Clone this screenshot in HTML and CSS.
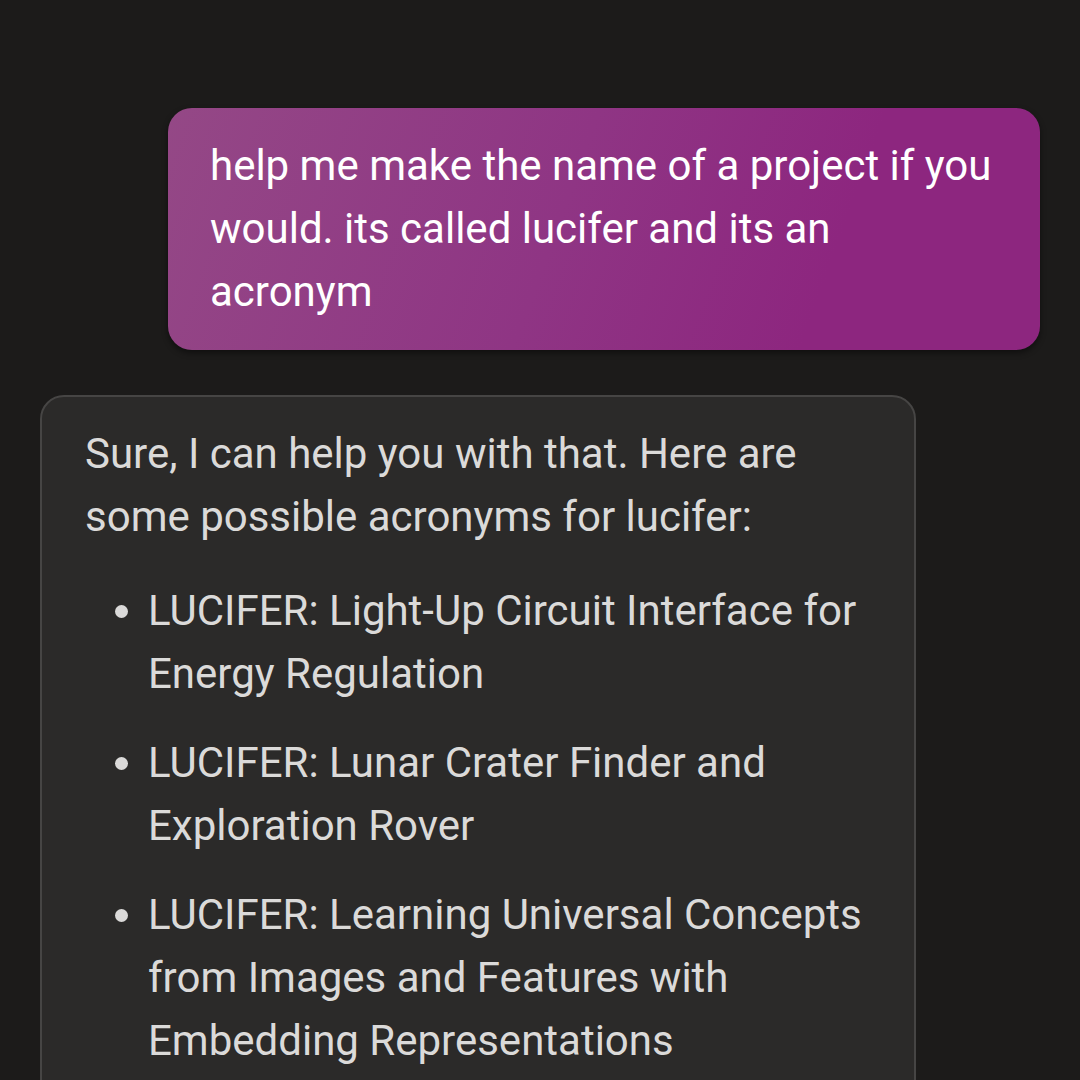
FILE: index.html
```html
<!DOCTYPE html>
<html lang="en">
<head>
    <meta charset="UTF-8">
    <meta name="viewport" content="width=device-width, initial-scale=1.0">
    <title>Chat</title>
    <link rel="stylesheet" href="styles.css">
</head>
<body>
    <div class="chat">
        <div class="bubble user">
            help me make the name of a project if you would. its called lucifer and its an acronym
        </div>

        <div class="bubble bot">
            <p>Sure, I can help you with that. Here are some possible acronyms for lucifer:</p>
            <ul>
                <li>LUCIFER: Light-Up Circuit Interface for Energy Regulation</li>
                <li>LUCIFER: Lunar Crater Finder and Exploration Rover</li>
                <li>LUCIFER: Learning Universal Concepts from Images and Features with Embedding Representations</li>
            </ul>
        </div>
    </div>
</body>
</html>
```

FILE: styles.css
```css
html, body {
    margin: 0;
    height: 100%;
    overflow: hidden;
}
body {
    background-color: #1c1b1a;
    font-family: Roboto, "Liberation Sans", sans-serif;
    font-size: 42px;
    line-height: 63px;
}
.chat {
    display: flex;
    flex-direction: column;
    gap: 45px;
    padding: 108px 40px 0;
}
.bubble {
    box-sizing: border-box;
    border-radius: 24px;
}
.user {
    align-self: flex-end;
    width: 872px;
    padding: 26px 40px 27px 42px;
    color: #fff;
    background: linear-gradient(110deg, #944886 0%, #8f3584 45%, #8d267f 75%);
    box-shadow: 0 3px 6px rgba(0, 0, 0, 0.45);
}
.bot {
    align-self: flex-start;
    width: 876px;
    padding: 25px 43px 60px;
    color: #dbdad9;
    background-color: #2b2a29;
    border: 2px solid #464544;
}
.bot p {
    margin: 0 0 31px;
}
.bot ul {
    margin: 0;
    padding-left: 63px;
}
.bot li {
    margin-bottom: 26px;
}
```
